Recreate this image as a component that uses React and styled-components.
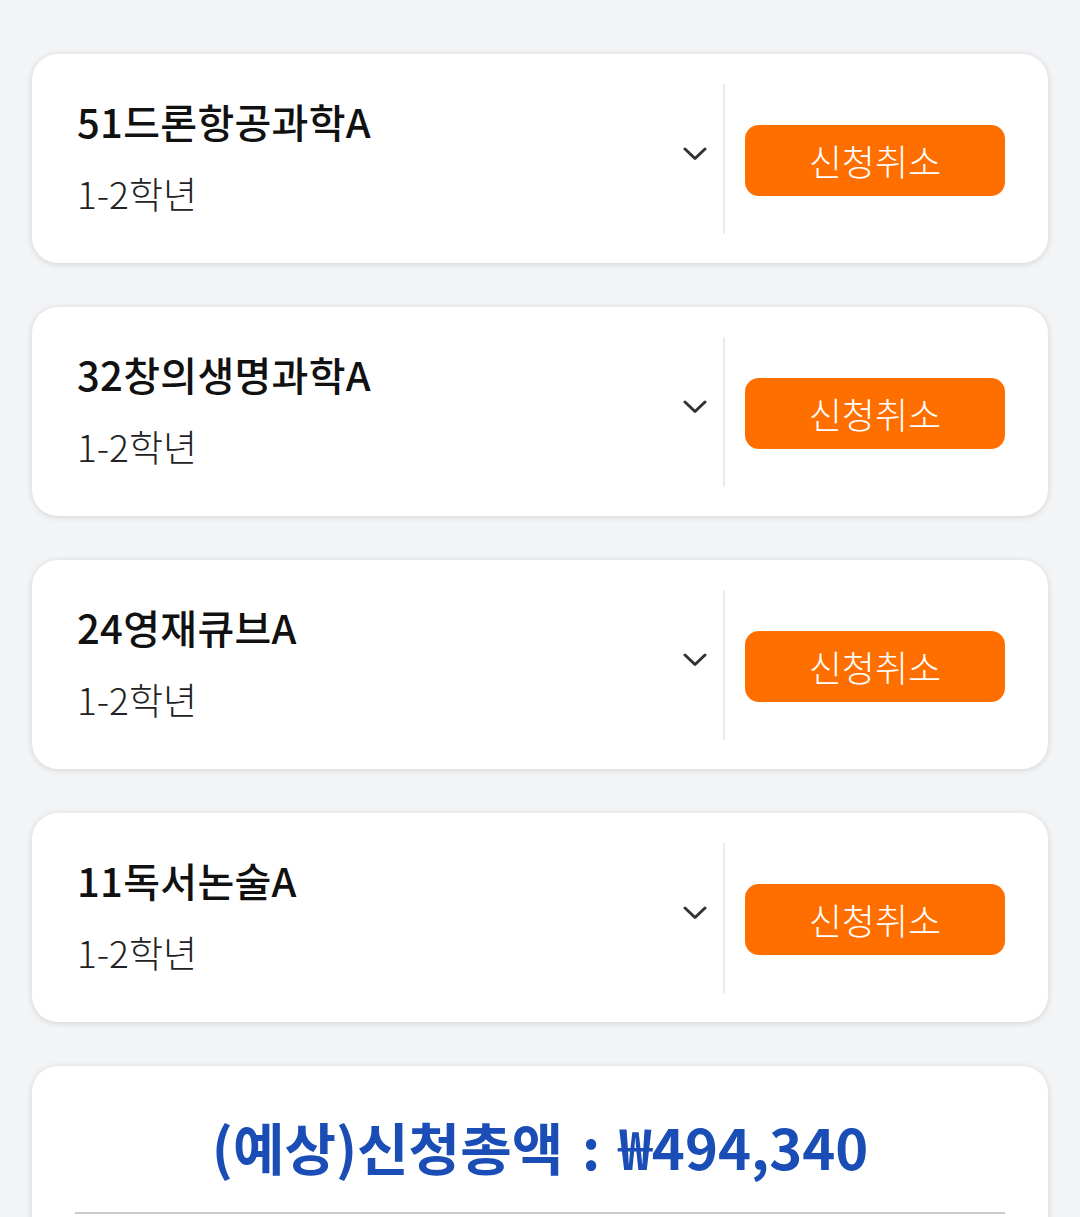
import styled, { createGlobalStyle } from "styled-components";

const courses = [
  { id: 1, title: "51드론항공과학A", grade: "1-2학년" },
  { id: 2, title: "32창의생명과학A", grade: "1-2학년" },
  { id: 3, title: "24영재큐브A", grade: "1-2학년" },
  { id: 4, title: "11독서논술A", grade: "1-2학년" },
];

const GlobalStyle = createGlobalStyle`
  body {
    margin: 0;
    background-color: #f3f4f6;
    font-family: "Noto Sans CJK KR", "Noto Sans", sans-serif;
  }
`;

const Chevron = () => (
  <svg width="24" height="16" viewBox="0 0 24 16" fill="none">
    <path
      d="M2 3 L12 12.5 L22 3"
      stroke="#333333"
      strokeWidth="3"
      strokeLinecap="round"
      strokeLinejoin="round"
    />
  </svg>
);

const CourseCard = ({ title, grade }) => {
  return (
    <Card>
      <Info>
        <Title>{title}</Title>
        <Grade>{grade}</Grade>
      </Info>
      <Toggle>
        <Chevron />
      </Toggle>
      <Divider />
      <ButtonArea>
        <CancelButton>신청취소</CancelButton>
      </ButtonArea>
    </Card>
  );
};

const App = () => {
  return (
    <Page>
      <GlobalStyle />
      {courses.map((c) => (
        <CourseCard key={c.id} title={c.title} grade={c.grade} />
      ))}
      <TotalCard>
        <Total>(예상)신청총액 : ₩494,340</Total>
        <Rule />
      </TotalCard>
    </Page>
  );
};

const Page = styled.div`
  display: flex;
  flex-direction: column;
  gap: 44px;
  padding: 54px 32px 40px;
  min-height: 1217px;
  box-sizing: border-box;
`;

const Card = styled.div`
  display: flex;
  align-items: stretch;
  background-color: #ffffff;
  border-radius: 26px;
  box-shadow: 0px 1px 6px rgba(0, 0, 0, 0.14);
  height: 209px;
  box-sizing: border-box;
  padding: 30px 43px 29px 45px;
`;

const Info = styled.div`
  flex: 1;
  display: flex;
  flex-direction: column;
  justify-content: center;
  padding-bottom: 8px;
`;

const Title = styled.div`
  font-size: 40px;
  font-weight: 500;
  line-height: 52px;
  color: #111111;
  letter-spacing: 0.3px;
`;

const Grade = styled.div`
  font-size: 37px;
  font-weight: 300;
  line-height: 44px;
  margin-top: 24px;
  color: #222222;
`;

const Toggle = styled.div`
  display: flex;
  align-items: center;
  padding-right: 16px;
  padding-bottom: 10px;
`;

const Divider = styled.div`
  width: 2px;
  background-color: #ececec;
`;

const ButtonArea = styled.div`
  display: flex;
  align-items: center;
  padding-left: 20px;
`;

const CancelButton = styled.button`
  width: 260px;
  height: 71px;
  border: none;
  border-radius: 14px;
  background-color: #ff6f00;
  color: #ffffff;
  font-family: "Noto Sans CJK KR", "Noto Sans", sans-serif;
  font-size: 36px;
  font-weight: 300;
  padding: 0;
  margin-top: 2px;
`;

const TotalCard = styled.div`
  background-color: #ffffff;
  border-radius: 26px;
  box-shadow: 0px 1px 6px rgba(0, 0, 0, 0.14);
  padding: 44px 43px 40px;
  display: flex;
  flex-direction: column;
  align-items: center;
`;

const Total = styled.div`
  font-size: 56px;
  font-weight: 700;
  line-height: 72px;
  color: #1a4db5;
  word-spacing: 6px;
`;

const Rule = styled.div`
  align-self: stretch;
  height: 2px;
  background-color: #cccccc;
  margin-top: 30px;
`;

export default App;
